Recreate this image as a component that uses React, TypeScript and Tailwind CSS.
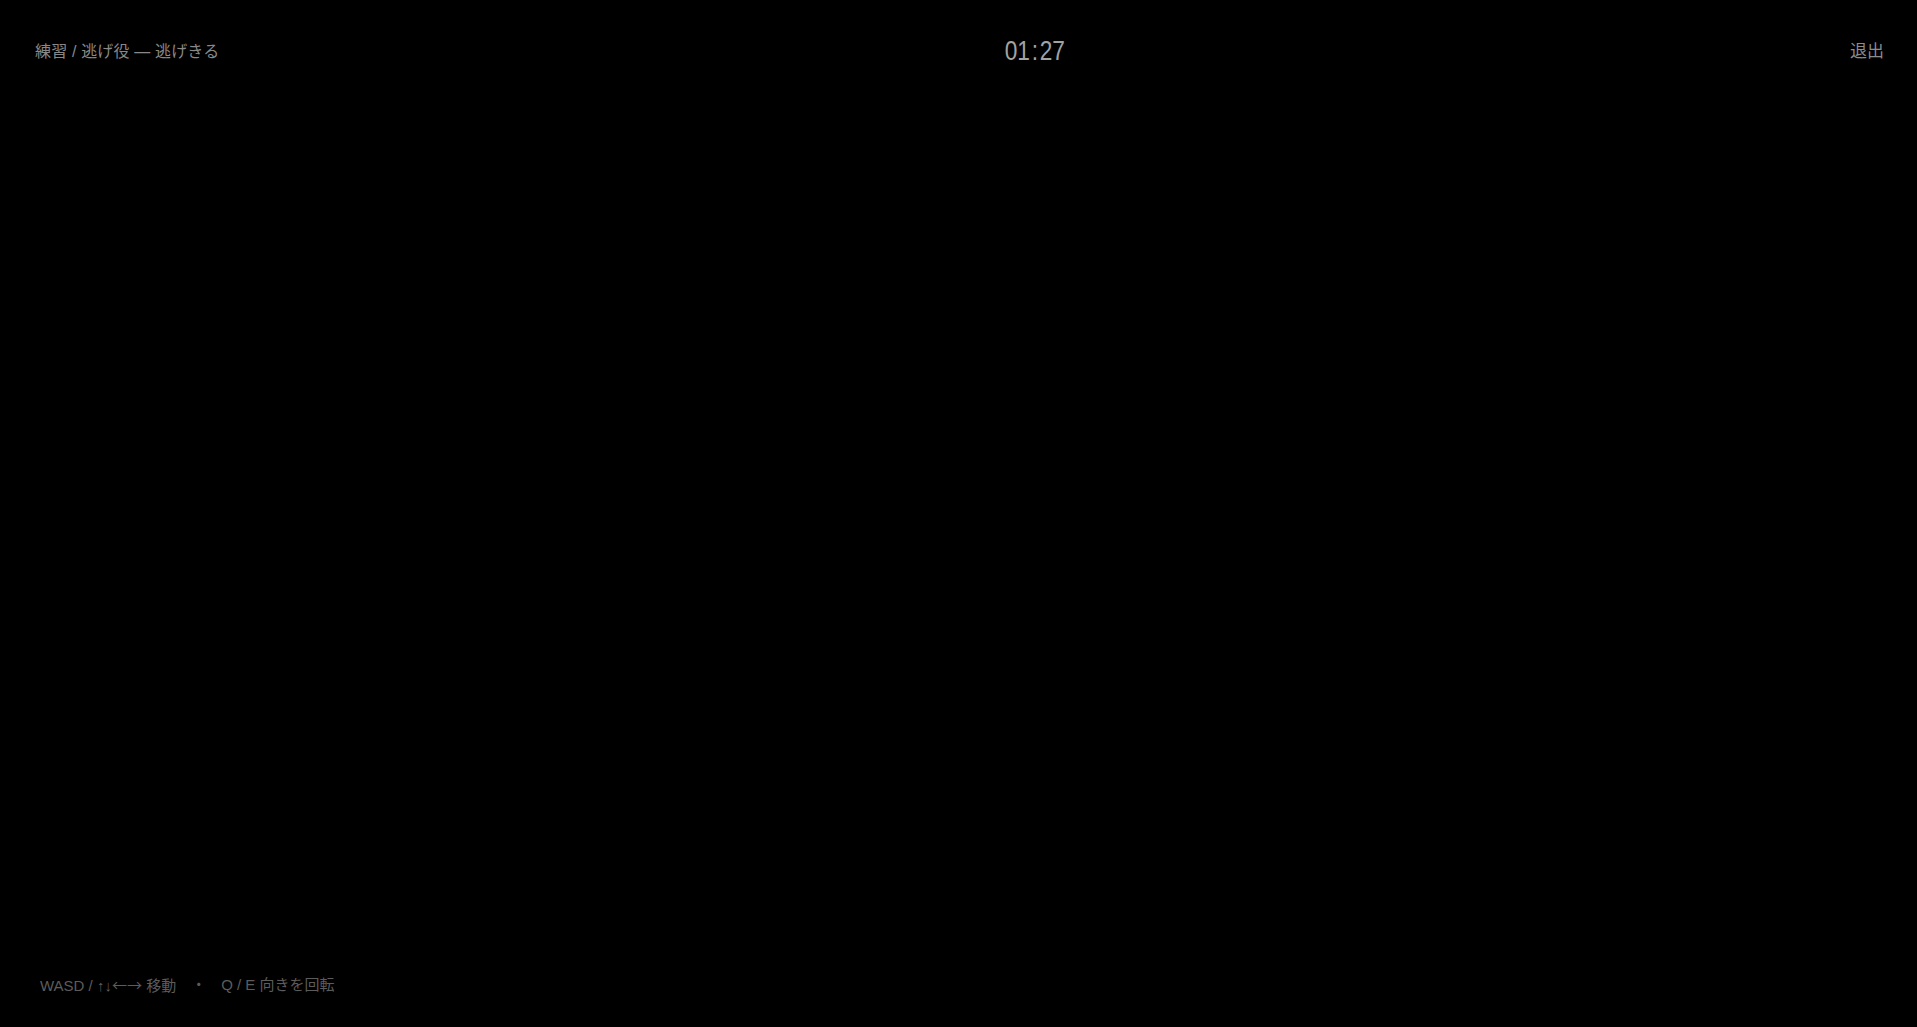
export default function App() {
    return (
        <main className="relative flex flex-col justify-between h-screen w-full bg-black font-['Liberation_Sans','Noto_Sans_CJK_JP',sans-serif] overflow-hidden">
            <header className="flex items-center justify-between pl-[35px] pr-[33px] pt-[38px]">
                <div className="text-[16px] tracking-[0.01em] text-[#888888] pt-[1px]">
                    練習 / 逃げ役 — 逃げきる
                </div>
                <div className="flex items-center text-[27px] leading-none text-[#a0a3a3] font-['Liberation_Sans',sans-serif] tabular-nums scale-x-[0.84]">
                    <span>01</span>
                    <span className="mx-[2px]">:</span>
                    <span>27</span>
                </div>
                <button className="text-[17px] text-[#8c8c8c] pt-[1px]">退出</button>
            </header>

            <footer className="flex items-center px-[40px] pb-[30px] text-[15px] text-[#5c5c5c]">
                <span>
                    WASD / ↑↓<span className="font-['Noto_Sans_CJK_JP',sans-serif]">←→</span> 移動
                </span>
                <span className="mx-[15px]">・</span>
                <span>Q / E 向きを回転</span>
            </footer>
        </main>
    );
}
